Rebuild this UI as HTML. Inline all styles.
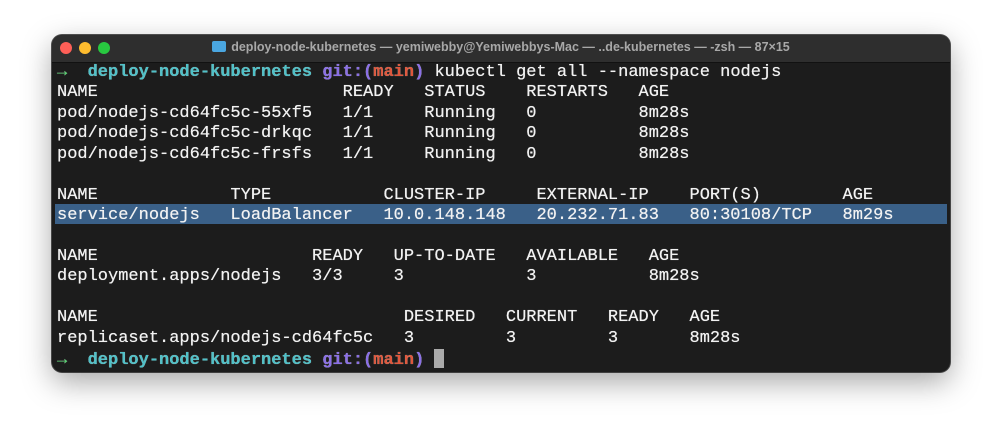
<!DOCTYPE html>
<html><head><style>
html,body{margin:0;padding:0;background:#fff;width:1003px;height:442px;overflow:hidden}
.win{position:absolute;left:52px;top:35px;width:898px;height:337px;border-radius:10px;background:#1c1c1c;box-shadow:0 10px 30px rgba(0,0,0,.35),0 0 0 1px #555;overflow:hidden}
.tb{height:27px;background:#2e2e2e;border-bottom:1px solid #111;position:relative}
.dot{position:absolute;top:7px;width:12px;height:12px;border-radius:50%}
.title{position:absolute;left:0;right:0;top:5px;text-align:center;font:bold 12.5px "Liberation Sans",sans-serif;color:#a8a8a8}
.fold{display:inline-block;width:14px;height:11px;background:#4aa6e0;border-radius:2px;vertical-align:-1px;margin-right:5px}
pre{position:absolute;left:5px;top:28px;margin:0;font:17px/20.43px "Liberation Mono",monospace;color:#f2f2f2;text-shadow:0 0 .5px #fff}
.c{color:#4fc1c8;font-weight:bold}.g{color:#8a6fe6;font-weight:bold}.r{color:#e0573c;font-weight:bold}.a{color:#4fd06a;font-weight:bold}
.hl{position:absolute;left:3px;top:169px;width:892px;height:20px;background:#3a6088}
.cur{display:inline-block;width:10px;height:19px;background:#aaa;vertical-align:-4px}
</style></head><body>
<div class="win">
<div class="tb">
<div class="dot" style="left:8px;background:#fe5f57"></div>
<div class="dot" style="left:27px;background:#febc2e"></div>
<div class="dot" style="left:46px;background:#28c840"></div>
<div class="title"><span class="fold"></span>deploy-node-kubernetes — yemiwebby@Yemiwebbys-Mac — ..de-kubernetes — -zsh — 87×15</div>
</div>
<div class="hl"></div>
<pre><span class="a">→</span>  <span class="c">deploy-node-kubernetes</span> <span class="g">git:(</span><span class="r">main</span><span class="g">)</span> kubectl get all --namespace nodejs
NAME                        READY   STATUS    RESTARTS   AGE
pod/nodejs-cd64fc5c-55xf5   1/1     Running   0          8m28s
pod/nodejs-cd64fc5c-drkqc   1/1     Running   0          8m28s
pod/nodejs-cd64fc5c-frsfs   1/1     Running   0          8m28s

NAME             TYPE           CLUSTER-IP     EXTERNAL-IP    PORT(S)        AGE
service/nodejs   LoadBalancer   10.0.148.148   20.232.71.83   80:30108/TCP   8m29s

NAME                     READY   UP-TO-DATE   AVAILABLE   AGE
deployment.apps/nodejs   3/3     3            3           8m28s

NAME                              DESIRED   CURRENT   READY   AGE
replicaset.apps/nodejs-cd64fc5c   3         3         3       8m28s
<span class="a">→</span>  <span class="c">deploy-node-kubernetes</span> <span class="g">git:(</span><span class="r">main</span><span class="g">)</span> <span class="cur"></span></pre>
</div>
</body></html>
